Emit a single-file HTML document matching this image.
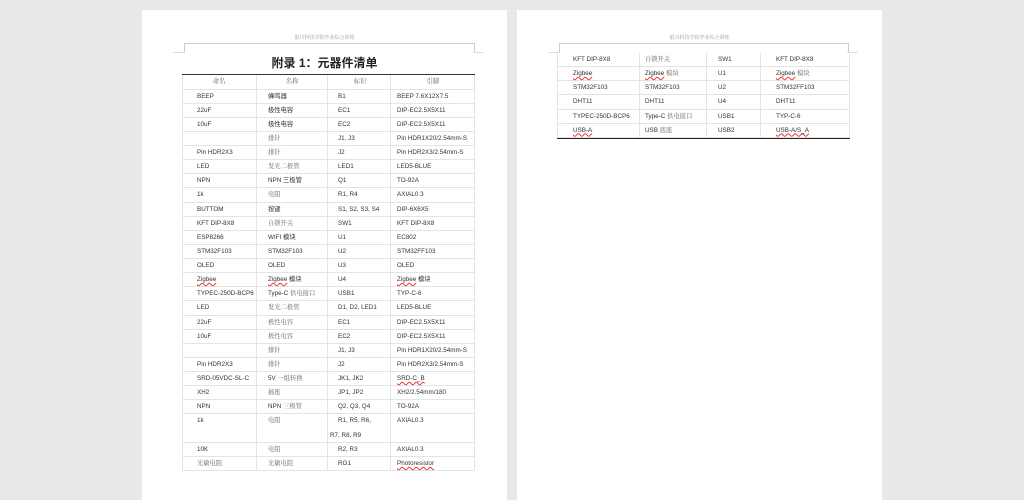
<!DOCTYPE html>
<html><head><meta charset="utf-8"><style>
body{margin:0;width:1024px;height:490px;background:#e8e8e8;position:relative;overflow:hidden;font-family:"Liberation Sans","Noto Sans CJK SC",sans-serif;}
.page{position:absolute;top:10px;width:365px;height:490px;background:#fff;}
.hd{position:absolute;top:34px;font-family:"Liberation Serif","Noto Serif CJK SC",serif;font-size:5px;color:#999;width:365px;text-align:center;}
.hl{position:absolute;border:1px solid #ccc;border-bottom:none;height:9px;}
.hb{position:absolute;height:1px;background:#ddd;}
.r{position:absolute;left:0;right:0;border-bottom:1px solid #e4e4e4;font-size:6.3px;color:#333;line-height:7px;}
.r span{position:absolute;top:3px;white-space:nowrap;line-height:7px;height:7px;}
.r i{font-style:normal;line-height:7px;vertical-align:top;}
.v{position:absolute;width:1px;background:#e4e4e4;}
.c{color:#666;font-family:"Liberation Serif","Noto Serif CJK SC",serif;}
.u{text-decoration:underline wavy #e33;text-decoration-thickness:0.5px;}
</style></head><body>
<div class="page" style="left:142px"></div>
<div class="page" style="left:517px"></div>
<div class="hd" style="left:142px">银川科技学院毕业综合训练</div>
<div class="hd" style="left:517px">银川科技学院毕业综合训练</div>
<div class="hl" style="left:184px;top:43px;width:289px"></div>
<div class="hb" style="left:173px;top:52px;width:12px"></div>
<div class="hb" style="left:473px;top:52px;width:11px"></div>
<div class="hl" style="left:559px;top:43px;width:288px"></div>
<div class="hb" style="left:548px;top:52px;width:12px"></div>
<div class="hb" style="left:847px;top:52px;width:11px"></div>
<div style="position:absolute;left:142px;width:365px;top:55px;text-align:center;font-size:12px;font-weight:bold;color:#222;line-height:16px;">附录 1：元器件清单</div>
<div id="t1" style="position:absolute;left:182px;top:74px;width:293px;height:399px;border-top:1.5px solid #333;"></div>
<div id="t2" style="position:absolute;left:557px;top:53px;width:293px;height:85px;border-bottom:1.5px solid #222;"></div>
<script>
function build(id,rows,cols,tx,hdr){
 const t=document.getElementById(id);let y=0;let h='';
 rows.forEach((r,i)=>{const hh=r[4]||14.13;
  h+=`<div class="r" style="top:${y}px;height:${hh-1}px">`;
  r.slice(0,4).forEach((c,j)=>{
    if(hdr&&i==0){h+=`<span style="left:${hdr[j]-20}px;width:40px;text-align:center">${c}</span>`;}
    else h+=`<span style="left:${tx[j]}px">${c}</span>`;});
  h+='</div>';y+=hh;});
 cols.forEach(x=>{h+=`<div class="v" style="left:${x}px;top:0;height:${y}px"></div>`;});
 h+=`<div class="v" style="left:0;top:0;height:${y}px"></div><div class="v" style="right:0;top:0;height:${y}px"></div>`;
 t.innerHTML=h;}
const C=s=>`<i class="c">${s}</i>`;
const U=s=>`<i class="u">${s}</i>`;
const r1=[
[C('命名'),C('名称'),C('标识'),C('引脚'),14.5],
['BEEP','蜂鸣器','B1','BEEP 7.6X12X7.5'],
['22uF','极性电容','EC1','DIP-EC2.5X5X11'],
['10uF','极性电容','EC2','DIP-EC2.5X5X11'],
['',C('排针'),'J1, J3','Pin HDR1X20/2.54mm-S'],
['Pin HDR2X3',C('排针'),'J2','Pin HDR2X3/2.54mm-S'],
['LED',C('发光二极管'),'LED1','LED5-BLUE'],
['NPN','NPN 三极管','Q1','TO-92A'],
['1k',C('电阻'),'R1, R4','AXIAL0.3'],
['BUTTOM','按键','S1, S2, S3, S4','DIP-6X6X5'],
['KFT DIP-8X8',C('自锁开关'),'SW1','KFT DIP-8X8'],
['ESP8266','WIFI 模块','U1','EC802'],
['STM32F103','STM32F103','U2','STM32FF103'],
['OLED','OLED','U3','OLED'],
[U('Zigbee'),U('Zigbee')+' 模块','U4',U('Zigbee')+' 模块'],
['TYPEC-250D-BCP6','Type-C '+C('供电接口'),'USB1','TYP-C-6'],
['LED',C('发光二极管'),'D1, D2, LED1','LED5-BLUE'],
['22uF',C('极性电容'),'EC1','DIP-EC2.5X5X11'],
['10uF',C('极性电容'),'EC2','DIP-EC2.5X5X11'],
['',C('排针'),'J1, J3','Pin HDR1X20/2.54mm-S'],
['Pin HDR2X3',C('排针'),'J2','Pin HDR2X3/2.54mm-S'],
['SRD-05VDC-SL-C','5V '+C('一组转换'),'JK1, JK2',U('SRD-C_B')],
['XH2',C('插座'),'JP1, JP2','XH2/2.54mm/180'],
['NPN','NPN '+C('三极管'),'Q2, Q3, Q4','TO-92A'],
['1k',C('电阻'),'R1, R5, R6,<br><i style="position:relative;left:-8px;top:8px">R7, R8, R9</i>','AXIAL0.3',28.5],
['10K',C('电阻'),'R2, R3','AXIAL0.3'],
[C('光敏电阻'),C('光敏电阻'),'RG1',U('Photoresistor')]];
build('t1',r1,[74,145,208],[15,86,156,215],[37,110,178,251]);
const r2=[
['KFT DIP-8X8',C('自锁开关'),'SW1','KFT DIP-8X8'],
[U('Zigbee'),U('Zigbee')+' '+C('模块'),'U1',U('Zigbee')+' '+C('模块')],
['STM32F103','STM32F103','U2','STM32FF103'],
['DHT11','DHT11','U4','DHT11'],
['TYPEC-250D-BCP6','Type-C '+C('供电接口'),'USB1','TYP-C-6'],
[U('USB-A'),'USB '+C('底座'),'USB2',U('USB-A/S_A')]];
build('t2',r2,[82,149,203],[16,88,161,219],null);
</script>
</body></html>
